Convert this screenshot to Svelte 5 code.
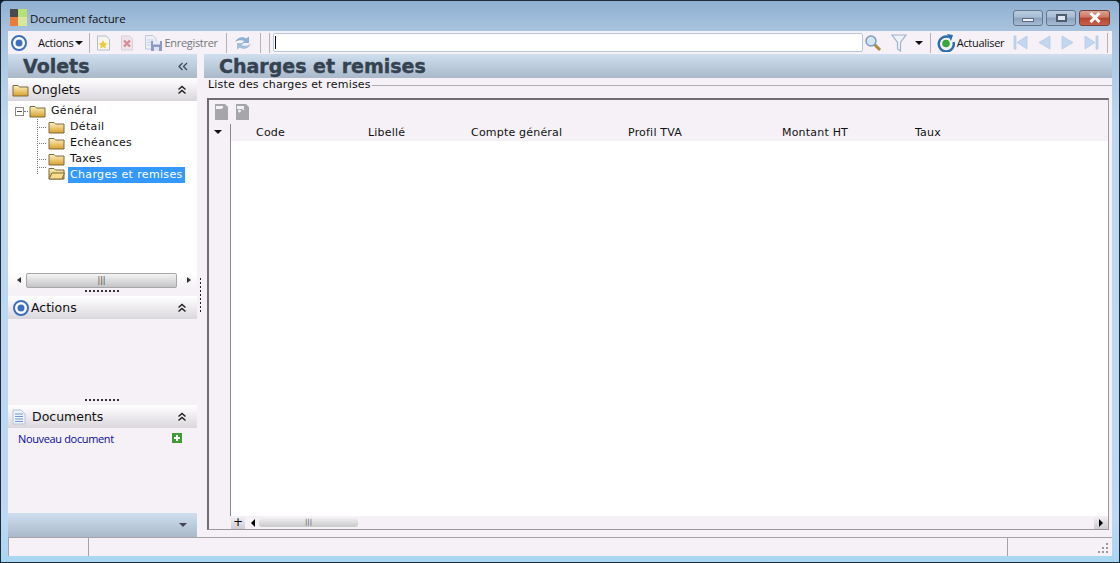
<script lang="ts">
  const tree = ['Détail', 'Echéances', 'Taxes'];
  const columns = [
    { label: 'Code', width: 112 },
    { label: 'Libellé', width: 103 },
    { label: 'Compte général', width: 157 },
    { label: 'Profil TVA', width: 154 },
    { label: 'Montant HT', width: 133 },
    { label: 'Taux', width: 100 }
  ];
</script>

{#snippet folder(open = false)}
  <svg class="folder" width="17" height="13" viewBox="0 0 17 13">
    <defs>
      <linearGradient id="fold" x1="0" y1="0" x2="0" y2="1">
        <stop offset="0" stop-color="#fdf2c0" />
        <stop offset="1" stop-color="#d9a02e" />
      </linearGradient>
    </defs>
    <path d="M1 3V1.500h5L7.500 3H16V12H1Z" fill="url(#fold)" stroke="#7d6a3c" />
    {#if open}
      <path d="M1 12L4 6H16.500L14 12Z" fill="#f8dc8a" stroke="#7d6a3c" />
    {/if}
  </svg>
{/snippet}

{#snippet target()}
  <svg width="18" height="18" viewBox="0 0 18 18">
    <circle cx="9" cy="9" r="7" fill="#fff" stroke="#3d6fc0" stroke-width="2" />
    <circle cx="9" cy="9" r="3.500" fill="#3d6fc0" />
  </svg>
{/snippet}

{#snippet chevrons()}
  <svg width="10" height="10" viewBox="0 0 10 10" fill="none" stroke="#222" stroke-width="1.500">
    <path d="M1.500 4.500L5 1.500L8.500 4.500M1.500 8.500L5 5.500L8.500 8.500" />
  </svg>
{/snippet}

{#snippet page(extra = false)}
  <svg width="13" height="16" viewBox="0 0 13 16">
    <path d="M0 0H13V16H0Z" fill="#a6a5a8" />
    <path d="M1 2H8V4L6 5H1Z" fill="#f5f1f6" />
    <path d="M10 0H13V3Z" fill="#f5f1f6" />
    {#if extra}
      <path d="M2 7H5M3.500 5.500V8.500M6 4L8 6" stroke="#f5f1f6" stroke-width="1.300" />
    {/if}
  </svg>
{/snippet}

<div class="window">
  <header class="titlebar">
    <div class="logo"><i class="a"></i><i class="b"></i><i class="c"></i><i class="d"></i></div>
    <span class="title-text">Document facture</span>
    <div class="win-buttons">
      <button class="win" aria-label="Réduire"><i class="min"></i></button>
      <button class="win" aria-label="Agrandir"><i class="max"></i></button>
      <button class="win close" aria-label="Fermer">
        <svg width="14" height="11" viewBox="0 0 14 11"><path d="M2.500 1L11.500 10M11.500 1L2.500 10" stroke="#fff" stroke-width="3" /></svg>
      </button>
    </div>
  </header>

  <nav class="toolbar">
    <span class="tool first">{@render target()}</span>
    <span class="label actions">Actions<i class="caret"></i></span>
    <i class="sep"></i>
    <svg class="tool" width="15" height="16" viewBox="0 0 15 16">
      <path d="M1.500 1H10L13.500 4V15H1.500Z" fill="#f7f5ec" stroke="#b3bdd6" />
      <path d="M7 5L8.500 8L11.500 8.500L9.300 10.500L9.800 13.500L7 12L4.200 13.500L4.700 10.500L2.500 8.500L5.500 8Z" fill="#eccb3e" />
    </svg>
    <svg class="tool del" width="14" height="16" viewBox="0 0 14 16">
      <path d="M1.500 1H9.500L12.500 4V15H1.500Z" fill="#f0e4e8" stroke="#d8cfd8" />
      <path d="M4 5.500L10 11.500M10 5.500L4 11.500" stroke="#d98a94" stroke-width="2.300" />
    </svg>
    <svg class="tool save" width="19" height="17" viewBox="0 0 19 17">
      <path d="M1.500 1.500H9L12 4.500V15H1.500Z" fill="#eef0f6" stroke="#bfc9dc" />
      <path d="M3 6H10M3 8.500H7M3 11H7" stroke="#c5d3ea" />
      <rect x="7" y="7" width="11" height="10" fill="#8f99c4" />
      <rect x="9" y="7" width="7" height="3.500" fill="#e8ebf6" />
      <rect x="10" y="13" width="5" height="4" fill="#dfe3f2" />
    </svg>
    <span class="label muted">Enregistrer</span>
    <i class="sep after-save"></i>
    <svg class="tool sync" width="18" height="18" viewBox="0 0 18 18">
      <path d="M1 8C3 3 9 2 12 4.500L15 2.500V9H8L10.500 7C8 5.500 4 6 1 8Z" fill="#8fb0d6" />
      <path d="M17 9.500C15 15 9 16 6 13.500L3 15.500V9H10L7.500 11C10 12.500 14 12 17 9.500Z" fill="#a3bedd" />
    </svg>
    <i class="sep after-sync"></i>
    <i class="sep tight"></i>
    <div class="search"><i class="cursor"></i></div>
    <svg class="tool lens" width="18" height="18" viewBox="0 0 18 18">
      <path d="M10.500 10.500L16 16" stroke="#b08a3a" stroke-width="3" />
      <circle cx="7" cy="7" r="5" fill="#d3e6f8" stroke="#7f9cc0" stroke-width="1.500" />
    </svg>
    <svg class="tool funnel" width="16" height="18" viewBox="0 0 16 18">
      <path d="M1 1H15L9.500 8.500V17L6.500 15V8.500Z" fill="#eef3f9" stroke="#9fb3cd" stroke-width="1.200" />
    </svg>
    <i class="caret funnel-caret"></i>
    <i class="sep"></i>
    <svg class="tool refresh" width="18" height="18" viewBox="0 0 18 18">
      <path d="M12 3A7.500 7.500 0 1 0 16.500 8" fill="none" stroke="#2c6fb0" stroke-width="2.500" />
      <path d="M10 0L16 1L14 7Z" fill="#2c6fb0" />
      <circle cx="9" cy="9.500" r="3.800" fill="#39a83c" />
    </svg>
    <span class="label">Actualiser</span>
    <div class="pager">
      <svg width="15" height="15" viewBox="0 0 15 15"><path d="M1 1H3V14H1ZM14 1V14L4 7.500Z" fill="#c4d7f0" stroke="#a9c1e0" stroke-width=".6" /></svg>
      <svg width="13" height="15" viewBox="0 0 13 15"><path d="M12 1V14L1 7.500Z" fill="#c4d7f0" stroke="#a9c1e0" stroke-width=".6" /></svg>
      <svg width="13" height="15" viewBox="0 0 13 15"><path d="M1 1V14L12 7.500Z" fill="#c4d7f0" stroke="#a9c1e0" stroke-width=".6" /></svg>
      <svg width="15" height="15" viewBox="0 0 15 15"><path d="M14 1H12V14H14ZM1 1V14L11 7.500Z" fill="#c4d7f0" stroke="#a9c1e0" stroke-width=".6" /></svg>
    </div>
    <i class="sep end"></i>
  </nav>

  <div class="body">
    <aside class="panes">
      <div class="pane-title">
        <span>Volets</span>
        <svg width="10" height="9" viewBox="0 0 10 9" fill="none" stroke="#3d4a58" stroke-width="1.300"><path d="M4.500 1L1 4.500L4.500 8M9 1L5.500 4.500L9 8" /></svg>
      </div>

      <section class="pane-head first-head">
        <span class="head-icon">{@render folder()}</span>
        <span class="head-label">Onglets</span>
        {@render chevrons()}
      </section>
      <div class="tree">
        <div class="node root">
          <i class="expander"></i><i class="dash"></i>
          {@render folder()}
          <span class="node-text">Général</span>
        </div>
        <div class="children">
          {#each tree as t}
            <div class="node"><i class="dash long"></i>{@render folder()}<span class="node-text">{t}</span></div>
          {/each}
          <div class="node"><i class="dash long"></i>{@render folder(true)}<span class="node-text selected">Charges et remises</span></div>
        </div>
      </div>
      <div class="hscroll">
        <i class="arrow left"></i>
        <div class="thumb"><span>|||</span></div>
        <i class="arrow right"></i>
      </div>
      <div class="grip"></div>

      <section class="pane-head">
        <span class="head-icon narrow">{@render target()}</span>
        <span class="head-label">Actions</span>
        {@render chevrons()}
      </section>
      <div class="actions-body"></div>
      <div class="grip"></div>

      <section class="pane-head">
        <span class="head-icon">
          <svg width="14" height="16" viewBox="0 0 14 16">
            <path d="M1 1H9L13 5V15H1Z" fill="#eef3fb" stroke="#b4c4de" />
            <path d="M3 5H11M3 7.500H11M3 10H11M3 12.500H11" stroke="#7396cf" />
          </svg>
        </span>
        <span class="head-label">Documents</span>
        {@render chevrons()}
      </section>
      <div class="doc-row">
        <span>Nouveau document</span>
        <svg width="10" height="10" viewBox="0 0 10 10"><rect width="10" height="10" fill="#3f9c35" /><path d="M5 2V8M2 5H8" stroke="#fff" stroke-width="2" /></svg>
      </div>
      <div class="pane-foot"><i class="caret grey"></i></div>
    </aside>

    <div class="splitter"><i></i></div>

    <main class="content">
      <div class="content-title">Charges et remises</div>
      <div class="legend-row"><span>Liste des charges et remises</span><i></i></div>
      <div class="grid">
        <div class="grid-tools">
          {@render page()}
          {@render page(true)}
        </div>
        <div class="grid-main">
          <div class="row-head"><i class="caret"></i></div>
          <div class="grid-body">
            <div class="columns">
              {#each columns as c}
                <span style="width: {c.width}px">{c.label}</span>
              {/each}
            </div>
            <div class="rows"></div>
            <div class="grid-scroll">
              <span class="plus">+</span>
              <i class="arrow left dark"></i>
              <div class="gthumb"><span>|||</span></div>
              <div class="gtrack"></div>
              <span class="rbtn"><i class="arrow right dark"></i></span>
            </div>
          </div>
        </div>
      </div>
    </main>
  </div>

  <footer class="status">
    <span class="cell one"></span>
    <span class="cell two"></span>
    <span class="cell three">
      <svg width="12" height="12" viewBox="0 0 12 12" fill="#9a9a9a"><path d="M9 1h2v2H9zM5 5h2v2H5zM9 5h2v2H9zM1 9h2v2H1zM5 9h2v2H5zM9 9h2v2H9z" /></svg>
    </span>
  </footer>
</div>

<style>
  :global(body) {
    margin: 0;
    background: #0d1a22;
  }
  .window {
    width: 1120px;
    height: 563px;
    box-sizing: border-box;
    display: flex;
    flex-direction: column;
    overflow: hidden;
    border: 1px solid #1d2c38;
    border-radius: 5px 5px 0 0;
    padding: 0 7px 6px;
    background: linear-gradient(180deg, #8fb0d2 0, #a8c3de 30px, #bcd6f0 120px, #bcd8f4 520px, #a9d6f2 100%);
    font-family: "DejaVu Sans", Verdana, sans-serif;
    font-size: 11px;
    color: #111;
  }
  i { display: block; }

  .titlebar {
    height: 30px;
    flex: none;
    display: flex;
    align-items: center;
    gap: 3px;
    padding-left: 2px;
  }
  .logo {
    width: 17px;
    height: 17px;
    margin-top: 3px;
    display: grid;
    grid-template-columns: 8px 9px;
    grid-template-rows: 8px 9px;
  }
  .logo .a { background: #4a4a4a; }
  .logo .b { background: #b6e07a; }
  .logo .c { background: #ec7c3c; }
  .logo .d { background: #d7e89a; }
  .title-text {
    font-family: "Open Sans", sans-serif;
    font-size: 11.5px;
    margin-top: 5px;
    letter-spacing: -0.1px;
  }
  .win-buttons {
    margin-left: auto;
    margin-right: 2px;
    display: flex;
    gap: 3px;
    margin-top: 3px;
  }
  .win {
    width: 30px;
    height: 16px;
    box-sizing: border-box;
    padding: 0;
    border: 1px solid #64768c;
    border-radius: 3px;
    background: linear-gradient(180deg, #b9cbe0 0, #a6bbd3 45%, #8aa0bb 50%, #a6bcd6 100%);
    display: flex;
    align-items: center;
    justify-content: center;
  }
  .win .min { width: 10px; height: 2px; margin-top: 5px; background: #eef2f7; border: 1px solid #5b6b7e; }
  .win .max { width: 7px; height: 4px; border: 2px solid #4d5c6e; background: #dfe7f0; }
  .win.close {
    width: 31px;
    border-color: #7a4239;
    background: linear-gradient(180deg, #dba493 0, #cd7562 45%, #b5432c 50%, #c8624c 100%);
  }

  .toolbar {
    height: 23px;
    flex: none;
    display: flex;
    align-items: center;
    background: #f5f1f6;
    font-family: "Open Sans", sans-serif;
    font-size: 11px;
  }
  .tool { flex: none; display: block; }
  .tool.first { margin: 0 0 0 2px; height: 18px; }
  .label { white-space: nowrap; letter-spacing: -0.3px; }
  .label.actions { display: flex; align-items: center; gap: 2px; margin-left: 10px; }
  .muted { color: #777; margin-left: 1px; }
  .caret {
    width: 0;
    height: 0;
    border-left: 4px solid transparent;
    border-right: 4px solid transparent;
    border-top: 4px solid #111;
  }
  .sep { width: 1px; height: 20px; background: #b4b2b6; flex: none; margin: 0 6px 0 6px; }
  .sep.after-save { margin: 0 7px 0 8px; }
  .sep.tight { margin: 0 3px 0 0; }
  .sep.after-sync { margin: 0 8px 0 8px; }
  .sep.end { margin: 0 0 0 8px; }
  .del { margin-left: 9px; }
  .save { margin-left: 10px; }
  .search {
    width: 590px;
    height: 19px;
    box-sizing: border-box;
    flex: none;
    background: #fff;
    border: 1px solid #b8c9dc;
    border-radius: 2px;
    padding: 2px 1px;
  }
  .cursor { width: 1px; height: 13px; background: #111; }
  .lens { margin-left: 1px; }
  .funnel { margin-left: 9px; }
  .funnel-caret { margin-left: 8px; margin-right: 1px; }
  .refresh { margin-right: 2px; }
  .pager { display: flex; gap: 10px; margin-left: 9px; align-items: center; }

  .body {
    flex: 1;
    min-height: 0;
    display: flex;
    background: #f5f1f6;
  }
  .panes {
    width: 189px;
    flex: none;
    display: flex;
    flex-direction: column;
  }
  .pane-title {
    height: 24px;
    flex: none;
    display: flex;
    align-items: center;
    justify-content: space-between;
    padding: 0 9px 0 15px;
    background: linear-gradient(180deg, #cfdff0 0, #a9b9ca 100%);
    font-weight: bold;
    font-size: 19px;
    color: #35424f;
    -webkit-text-stroke: 0.4px #35424f;
  }
  .pane-head {
    height: 23px;
    flex: none;
    display: flex;
    align-items: center;
    padding: 0 10px 0 4px;
    background: linear-gradient(180deg, #ffffff 0, #f2eff3 40%, #d9d7db 100%);
  }
  .pane-head.first-head { padding-top: 1px; box-sizing: border-box; }
  .head-icon {
    width: 20px;
    height: 18px;
    flex: none;
    display: flex;
    align-items: center;
  }
  .head-icon.narrow { width: 19px; }
  .head-label {
    flex: 1;
    font-size: 12.500px;
    letter-spacing: 0;
    padding-bottom: 1px;
  }
  .tree {
    height: 170px;
    flex: none;
    background: #fff;
    padding: 2px 0 0 7px;
    box-sizing: border-box;
    letter-spacing: 0.35px;
  }
  .node {
    height: 16px;
    display: flex;
    align-items: center;
    white-space: nowrap;
  }
  .expander {
    width: 7px;
    height: 7px;
    border: 1px solid #8a8a8a;
    background: linear-gradient(90deg, transparent 1px, #555 1px, #555 6px, transparent 6px) center / 100% 1px no-repeat;
  }
  .dash {
    width: 4px;
    border-top: 1px dotted #777;
    margin-right: 1px;
  }
  .dash.long { width: 9px; margin-right: 2px; }
  .children {
    margin-left: 22px;
    background: linear-gradient(#777 50%, transparent 50%) left top / 1px 2px repeat-y;
    height: 56px;
    width: 155px;
  }
  .children .node:last-child { height: 24px; align-items: flex-start; }
  .node-text { margin-left: 3px; padding: 0 2px; line-height: 16px; }
  .selected { background: #3399ff; color: #fff; height: 16px; }
  .folder { flex: none; }
  .hscroll {
    height: 18px;
    flex: none;
    display: flex;
    align-items: center;
    background: linear-gradient(180deg, #fff 0, #fff 3px, #f5f1f6 100%);
    padding: 0 6px 0 9px;
    gap: 5px;
    box-sizing: border-box;
  }
  .arrow { width: 0; height: 0; border-top: 3px solid transparent; border-bottom: 3px solid transparent; flex: none; }
  .arrow.left { border-right: 4px solid #333; }
  .arrow.right { border-left: 4px solid #333; margin-left: 5px; }
  .arrow.dark.left { border-right-color: #000; border-top-width: 4px; border-bottom-width: 4px; }
  .arrow.dark.right { border-left-color: #000; border-top-width: 4px; border-bottom-width: 4px; }
  .thumb {
    width: 151px;
    height: 15px;
    box-sizing: border-box;
    border: 1px solid #a7a7ab;
    border-radius: 2px;
    background: linear-gradient(180deg, #f4f4f4, #c4c4c6);
    text-align: center;
    font-size: 8px;
    line-height: 13px;
    color: #444;
  }
  .grip {
    height: 2px;
    flex: none;
    width: 35px;
    margin: 1px auto 4px;
    background: repeating-linear-gradient(90deg, #333 0 2px, transparent 2px 4px);
  }
  .actions-body { height: 79px; flex: none; }
  .doc-row {
    height: 20px;
    flex: none;
    display: flex;
    align-items: center;
    justify-content: space-between;
    padding: 0 15px 0 10px;
    font-family: "Open Sans", sans-serif;
    font-size: 11px;
    color: #0a0a9a;
    letter-spacing: -0.35px;
  }
  .pane-foot {
    margin-top: auto;
    height: 24px;
    flex: none;
    display: flex;
    align-items: center;
    justify-content: flex-end;
    padding-right: 10px;
    background: linear-gradient(180deg, #cfdff0 0, #a9b9ca 100%);
  }
  .caret.grey { border-top-color: #445; }

  .splitter { width: 7px; flex: none; position: relative; }
  .splitter i {
    position: absolute;
    left: 3px;
    top: 224px;
    width: 1px;
    height: 34px;
    background: repeating-linear-gradient(180deg, #222 0 2px, transparent 2px 4px);
  }

  .content {
    flex: 1;
    min-width: 0;
    display: flex;
    flex-direction: column;
  }
  .content-title {
    height: 24px;
    flex: none;
    box-sizing: border-box;
    padding-left: 15px;
    background: linear-gradient(180deg, #cfdff0 0, #a9b9ca 100%);
    font-weight: bold;
    font-size: 19px;
    line-height: 24px;
    color: #35424f;
    -webkit-text-stroke: 0.4px #35424f;
  }
  .legend-row {
    height: 20px;
    flex: none;
    display: flex;
    padding-left: 4px;
    font-size: 11px;
    line-height: 14px;
    letter-spacing: 0.2px;
  }
  .legend-row i { flex: 1; height: 1px; background: #b0adb2; margin: 7px 0 0 1px; }
  .grid {
    height: 432px;
    margin: 0 3px;
    flex: none;
    box-sizing: border-box;
    border: 1px solid #9b989d;
    border-top: 2px solid #6f6d72;
    border-left: 2px solid #6f6d72;
    display: flex;
    flex-direction: column;
  }
  .grid-tools {
    height: 24px;
    flex: none;
    display: flex;
    align-items: center;
    gap: 8px;
    padding-left: 6px;
  }
  .grid-main { flex: 1; display: flex; min-height: 0; }
  .row-head {
    width: 22px;
    flex: none;
    border-right: 1px solid #8a888c;
    box-sizing: border-box;
    padding: 6px 0 0 5px;
    margin-bottom: 13px;
  }
  .grid-body { flex: 1; display: flex; flex-direction: column; min-width: 0; }
  .columns {
    height: 17px;
    flex: none;
    display: flex;
    align-items: center;
    padding-left: 25px;
    background: #f5f1f6;
    letter-spacing: 0.2px;
    white-space: nowrap;
  }
  .rows { flex: 1; background: #fff; }
  .grid-scroll {
    height: 13px;
    flex: none;
    display: flex;
    align-items: center;
    background: #f5f1f6;
  }
  .plus {
    width: 14px;
    text-align: center;
    font-size: 12px;
    line-height: 13px;
    background: linear-gradient(180deg, #f5f1f6, #cfcdd1);
    color: #000;
  }
  .grid-scroll .arrow.left { margin-left: 6px; }
  .gthumb {
    width: 99px;
    height: 9px;
    margin-left: 4px;
    border-radius: 3px;
    background: linear-gradient(180deg, #f0f0f0, #c8c8ca);
    font-size: 7px;
    line-height: 9px;
    text-align: center;
    color: #555;
  }
  .gtrack { flex: 1; }
  .rbtn {
    width: 14px;
    height: 13px;
    display: flex;
    align-items: center;
    background: linear-gradient(180deg, #f5f1f6, #cfcdd1);
  }

  .status {
    height: 18px;
    flex: none;
    display: flex;
    background: #f5f1f6;
    border-top: 1px solid #a5a3a8;
  }
  .cell { display: block; border-left: 1px solid #a5a3a8; box-sizing: border-box; }
  .one { width: 80px; }
  .two { width: 919px; }
  .three { flex: 1; display: flex; justify-content: flex-end; align-items: flex-end; padding: 0 3px 2px 0; }
</style>
